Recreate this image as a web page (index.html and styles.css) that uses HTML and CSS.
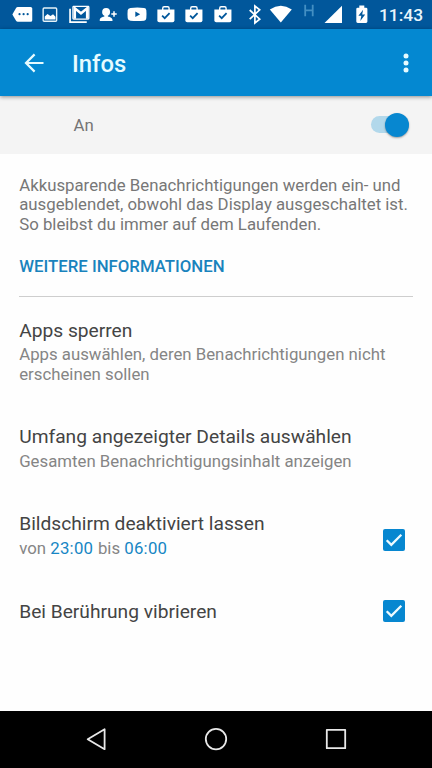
FILE: index.html
```html
<!DOCTYPE html>
<html lang="de">
<head>
<meta charset="utf-8">
<meta name="viewport" content="width=device-width">
<title>Infos</title>
<link rel="stylesheet" href="styles.css">
</head>
<body>
<div class="screen">
  <div class="status">
    <div class="notes">
      <svg viewBox="0 0 29 29"><path fill="#fff" d="M9.800 7h13q1.600 0 1.600 1.600v11.800q0 1.600-1.600 1.600h-13q-1 0-1.700-1l-3.700-6.500L8.100 8q.7-1 1.700-1z"/><g fill="#01579b"><circle cx="11.600" cy="14.300" r="1.100"/><circle cx="15.700" cy="14.300" r="1.100"/><circle cx="19.800" cy="14.300" r="1.100"/></g></svg>
      <svg viewBox="0 0 29 29"><rect x="7.200" y="8" width="13.600" height="13.400" rx="1" fill="none" stroke="#e5f2f8" stroke-width="1.400"/><path fill="#fff" d="M8.800 19.700v-3.200l2.800-2.300 3 2 2.600-1.800 2.400 2.400v2.900z"/></svg>
      <svg viewBox="0 0 29 29"><path d="M5.100 8.800v13.400h16.800" fill="none" stroke="#fff" stroke-width="1.700"/><rect x="8" y="6.400" width="16" height="12.800" rx=".8" fill="none" stroke="#fff" stroke-width="1.300"/><path d="M9.900 18.800V8.400l6.200 5 6.200-5v10.400" fill="none" stroke="#fff" stroke-width="2.500"/></svg>
      <svg viewBox="0 0 29 29"><g fill="#fff"><circle cx="12.200" cy="12" r="4"/><path d="M5.800 21.200v-1.300c0-2 3-3.100 4.600-3.400l.3-1.800h3l.3 1.800c1.600.3 4.600 1.400 4.600 3.400v1.300zM19.400 11.300h1.500v2h2v1.500h-2v2h-1.500v-2h-2v-1.500h2z"/></g></svg>
      <svg viewBox="0 0 29 29"><path fill="#fff" fill-rule="evenodd" d="M7.500 8q7-.7 13.700 0 2 .1 2.300 2.200.4 4.100 0 8.200-.3 2.200-2.300 2.400-7 .7-13.700 0-2.400-.2-2.800-2.400-.4-4.100 0-8.200.4-2 2.800-2.200zm4.900 3.500v5.600l4.900-2.800z"/></svg>
      <svg viewBox="0 0 29 29"><use href="#bag"/></svg>
      <svg viewBox="0 0 29 29"><use href="#bag"/></svg>
      <svg viewBox="0 0 29 29"><g id="bag"><path d="M10.800 10V8.200q0-1.400 1.400-1.400h3.600q1.400 0 1.400 1.400V10" fill="none" stroke="#fff" stroke-width="1.400"/><path fill="#fff" d="M5.400 9.500h17.200v11q0 1.900-1.900 1.900H7.300q-1.900 0-1.900-1.900z"/><path d="M10.200 15.800l2.600 2.500 4.900-5" fill="none" stroke="#01579b" stroke-width="1.800"/></g></svg>
    </div>
    <svg class="system" viewBox="240 0 134 29">
      <path d="M249.700 10l10 9.200-4.800 3.700V6l4.800 3.900-10 9.200" fill="none" stroke="#fff" stroke-width="1.700"/>
      <path fill="#fff" d="M280.800 22.500L269.800 9.400q11-7.200 22 0z"/>
      <path d="M305.200 4.700v11.600m7.500-11.600v11.600m-7.500-6h7.500" fill="none" stroke="#438fc3" stroke-width="1.800"/>
      <path fill="#fff" d="M342 5.800V23h-17.500z"/>
      <path fill="#fff" fill-rule="evenodd" d="M359.300 7.700V5.600h5v2.100h1.700q1.400 0 1.400 1.400v12.500q0 1.400-1.400 1.400h-8.300q-1.400 0-1.400-1.400V9.100q0-1.400 1.400-1.400zm3.800 2.100l-4.700 6h2.900l-1 5.300 4.900-6.700h-3z"/>
    </svg>
    <time class="clock">11:43</time>
  </div>
  <header class="appbar">
    <svg class="back" viewBox="0 0 20 20"><path d="M19.500 10H2m8.600-8.600L2 10l8.600 8.600" fill="none" stroke="#e6fbff" stroke-width="2.200"/></svg>
    <h1>Infos</h1>
    <svg class="more" viewBox="0 0 6 20"><g fill="#e6fbff"><circle cx="3" cy="3" r="2.500"/><circle cx="3" cy="10" r="2.500"/><circle cx="3" cy="17" r="2.500"/></g></svg>
  </header>
  <div class="switchbar"><span>An</span><div class="switch"><i></i></div></div>
  <main>
    <p class="intro">Akkusparende Benachrichtigungen werden ein- und<br>ausgeblendet, obwohl das Display ausgeschaltet ist.<br>So bleibst du immer auf dem Laufenden.</p>
    <a class="link">WEITERE INFORMATIONEN</a>
    <section class="item lock"><h2>Apps sperren</h2><p>Apps auswählen, deren Benachrichtigungen nicht<br>erscheinen sollen</p></section>
    <section class="item detail"><h2>Umfang angezeigter Details auswählen</h2><p>Gesamten Benachrichtigungsinhalt anzeigen</p></section>
    <section class="item checked night"><div><h2>Bildschirm deaktiviert lassen</h2><p>von <b>23:00</b> bis <b>06:00</b></p></div><svg class="check" viewBox="0 0 22 22"><rect width="22" height="22" rx="2" fill="#0787d0"/><path d="M3.700 11.300l4.600 4.500 10-10.100" fill="none" stroke="#effbff" stroke-width="2.300"/></svg></section>
    <section class="item checked"><h2>Bei Berührung vibrieren</h2><svg class="check" viewBox="0 0 22 22"><rect width="22" height="22" rx="2" fill="#0787d0"/><path d="M3.700 11.300l4.600 4.500 10-10.100" fill="none" stroke="#effbff" stroke-width="2.300"/></svg></section>
  </main>
  <nav>
    <svg viewBox="0 0 24 24"><path d="M20.600 2.200v20L3.700 12.200z"/></svg>
    <svg viewBox="0 0 24 24"><circle cx="12" cy="12.100" r="10.200"/></svg>
    <svg viewBox="0 0 24 24"><rect x="2.800" y="2.800" width="18.400" height="18.400"/></svg>
  </nav>
</div>
</body>
</html>
```

FILE: styles.css
```css
* { box-sizing: border-box; }
body { margin: 0; background: #fefefe; font-family: Roboto, sans-serif; }
h1, h2, p { margin: 0; }
svg { display: block; flex: none; }
.screen { width: 432px; height: 768px; display: flex; flex-direction: column; overflow: hidden; }
.status { height: 29px; flex: none; display: flex; background: #01579b; padding-left: 7.6px; }
.notes { display: flex; width: 232.4px; }
.notes svg { width: 28.8px; height: 28.8px; }
.system { width: 134px; height: 29px; }
.clock { padding-left: 5px; font-size: 17.4px; line-height: 31px; font-weight: 500; color: #eaf6fc; }
.appbar { height: 67px; flex: none; display: flex; align-items: center; padding: 1px 23.5px 0 24px; background: #0488d1; box-shadow: 0 1px 4px rgba(0, 0, 0, .42); z-index: 1; }
.back { width: 20px; height: 20px; }
.appbar h1 { flex: 1; margin-left: 28px; padding-top: 1px; color: #e6fbff; font-size: 23.8px; font-weight: 500; }
.more { width: 6px; height: 20px; }
.switchbar { height: 57.5px; flex: none; display: flex; align-items: center; justify-content: space-between; padding: 0 23.5px 0 73.5px; background: #f4f4f4; color: #747474; font-size: 16.8px; }
.switch { width: 38px; height: 17px; border-radius: 9px; background: #b2d8eb; display: flex; justify-content: flex-end; align-items: center; }
.switch i { width: 24px; height: 24px; flex: none; border-radius: 50%; background: #0787d0; box-shadow: 0 1px 2px rgba(0, 0, 0, .35); }
main { flex: 1; padding: 22px 19.2px 0; }
.intro { font-size: 16.8px; line-height: 19.7px; color: #777; white-space: nowrap; }
.link { display: block; height: 62.5px; padding-top: 21px; border-bottom: 1px solid #cecece; color: #1983bd; font-size: 16.8px; line-height: 20px; font-weight: 500; }
.item h2 { font-size: 19.2px; line-height: 24px; font-weight: 400; color: #444; white-space: nowrap; }
.item p { padding-top: 2.5px; font-size: 16.8px; line-height: 19.7px; color: #858585; white-space: nowrap; }
.item b { margin-right: .5px; font-weight: 400; color: #1686c4; letter-spacing: .25px; }
.lock { height: 128px; padding-top: 21.5px; }
.detail { height: 87px; }
.checked { display: flex; justify-content: space-between; padding-right: 8.3px; }
.night { height: 87.5px; }
.check { width: 22px; height: 22px; }
.night .check { margin-top: 16.5px; }
nav { height: 57.5px; flex: none; background: #000; display: flex; justify-content: center; align-items: center; gap: 96px; }
nav svg { width: 24px; height: 24px; fill: none; stroke: #e8e8e8; stroke-width: 1.8; stroke-linejoin: round; }
```
